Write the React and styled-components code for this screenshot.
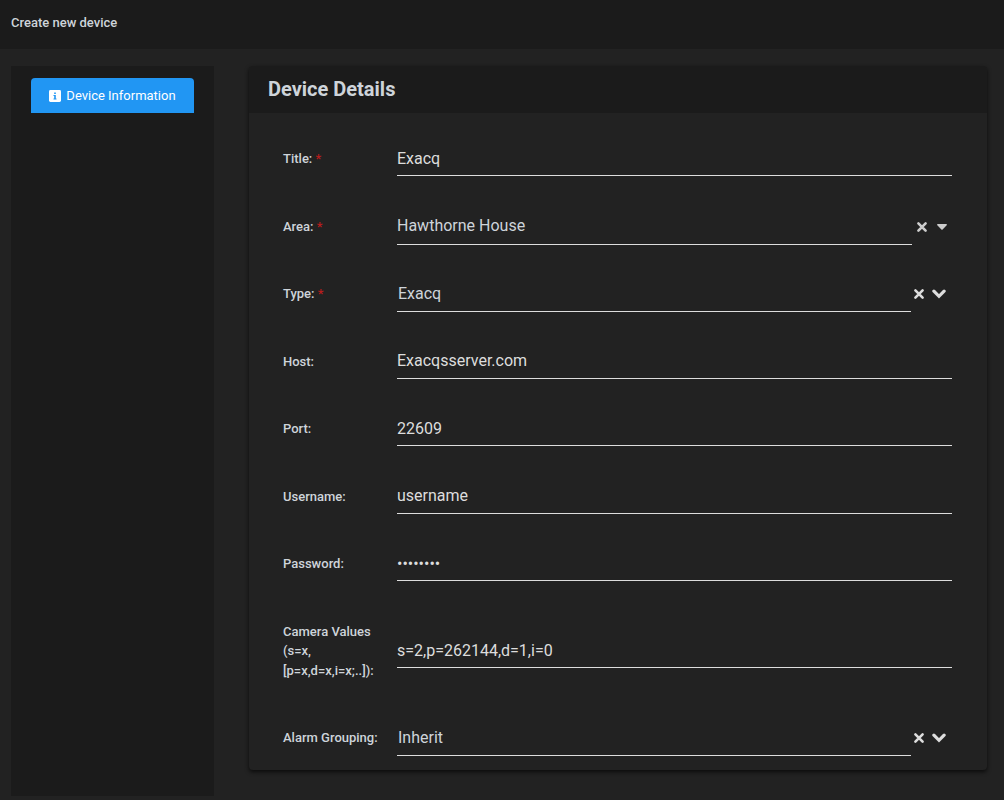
import styled, { createGlobalStyle } from "styled-components";

const FIELDS = [
  { id: "title", label: "Title:", required: true, value: "Exacq" },
  {
    id: "area",
    label: "Area:",
    required: true,
    kind: "tree",
    value: "Hawthorne House",
  },
  { id: "type", label: "Type:", required: true, kind: "select", value: "Exacq" },
  { id: "host", label: "Host:", value: "Exacqsserver.com" },
  { id: "port", label: "Port:", value: "22609" },
  { id: "username", label: "Username:", value: "username" },
  { id: "password", label: "Password:", type: "password", value: "password" },
  {
    id: "camera",
    label: "Camera Values (s=x,[p=x,d=x,i=x;..]):",
    value: "s=2,p=262144,d=1,i=0",
  },
  {
    id: "grouping",
    label: "Alarm Grouping:",
    kind: "select",
    value: "Inherit",
  },
];

const InfoIcon = () => (
  <svg width="12" height="12" viewBox="0 0 12 12" aria-hidden="true">
    <rect width="12" height="12" rx="1.4" fill="#ffffff" />
    <path
      d="M5.2 2.5h1.6V4H5.2zM4.5 5h2.3v3.5h.7v.9h-3v-.9h.7V5.9h-.7z"
      fill="#2196f3"
    />
  </svg>
);

const ClearIcon = () => (
  <svg width="14" height="14" viewBox="0 0 14 14" aria-hidden="true">
    <path
      d="M3.4 3.4l7.2 7.2M10.6 3.4l-7.2 7.2"
      stroke="currentColor"
      strokeWidth="2.6"
      strokeLinecap="round"
    />
  </svg>
);

const ChevronIcon = () => (
  <svg width="15" height="10" viewBox="0 0 15 10" aria-hidden="true">
    <path
      d="M1.9 2.2L7 7.3l5.1-5.1"
      fill="none"
      stroke="currentColor"
      strokeWidth="3.2"
      strokeLinecap="round"
    />
  </svg>
);

const CaretIcon = () => (
  <svg width="10" height="6" viewBox="0 0 10 6" aria-hidden="true">
    <path
      d="M.8 0h8.4c.7 0 1 .7.5 1.2L5.6 5.6a.9.9 0 0 1-1.2 0L.3 1.2C-.2.7.1 0 .8 0z"
      fill="currentColor"
    />
  </svg>
);

const SelectField = ({ id, value, tree }) => {
  return (
    <SelectWrapper>
      <Select id={id} defaultValue={value} $tree={tree}>
        <option>{value}</option>
      </Select>
      <SelectActions $tree={tree}>
        <IconButton type="button" aria-label="Clear" $tree={tree}>
          <ClearIcon />
        </IconButton>
        <IconButton type="button" aria-label="Open" $tree={tree}>
          {tree ? <CaretIcon /> : <ChevronIcon />}
        </IconButton>
      </SelectActions>
    </SelectWrapper>
  );
};

const Field = ({ id, label, required, kind, type = "text", value }) => {
  return (
    <Row>
      <Label htmlFor={id}>
        {label} {required && <Required>*</Required>}
      </Label>
      {kind ? (
        <SelectField id={id} value={value} tree={kind === "tree"} />
      ) : (
        <Input id={id} type={type} defaultValue={value} />
      )}
    </Row>
  );
};

const App = () => {
  return (
    <>
      <GlobalStyle />
      <Page>
        <TopBar>Create new device</TopBar>
        <Content>
          <Sidebar>
            <Tab type="button">
              <InfoIcon />
              Device Information
            </Tab>
          </Sidebar>
          <Card>
            <CardTitle>Device Details</CardTitle>
            <Form>
              {FIELDS.map((field) => (
                <Field key={field.id} {...field} />
              ))}
            </Form>
          </Card>
        </Content>
      </Page>
    </>
  );
};

const GlobalStyle = createGlobalStyle`
  * {
    box-sizing: border-box;
  }

  body {
    margin: 0;
    background: #222222;
    color: #ced4da;
    font-family: Roboto, sans-serif;
    font-size: 13px;
    font-weight: 500;
    line-height: 1.5;
  }
`;

const Page = styled.div`
  display: flex;
  flex-direction: column;
  min-height: 100vh;
`;

const TopBar = styled.header`
  height: 49px;
  padding: 13px 11px;
  background: #1b1b1b;
`;

const Content = styled.main`
  flex: 1;
  display: flex;
  align-items: flex-start;
  gap: 35px;
  padding: 17px 17px 4px 11px;
`;

const Sidebar = styled.nav`
  flex: 0 0 203px;
  align-self: stretch;
  padding: 12px 20px;
  background: #1b1b1b;
`;

const Tab = styled.button`
  display: flex;
  align-items: center;
  justify-content: center;
  gap: 5px;
  width: 100%;
  height: 35px;
  padding: 0;
  border: 0;
  border-radius: 4px 4px 0 0;
  background: #2196f3;
  color: #ffffff;
  font: inherit;
  font-weight: 400;
`;

const Card = styled.section`
  flex: 1;
  min-width: 0;
  border-radius: 4px;
  box-shadow: 0 2px 4px rgba(0, 0, 0, 0.7);
  overflow: hidden;
  background: #222222;
`;

const CardTitle = styled.h2`
  height: 47px;
  margin: 0;
  padding: 0 19px;
  background: #1b1b1b;
  font-size: 20px;
  font-weight: 700;
  line-height: 46px;
`;

const Form = styled.form`
  display: flex;
  flex-direction: column;
  gap: 32px;
  padding: 28px 35px 14px 34px;
`;

const Row = styled.div`
  display: grid;
  grid-template-columns: 114px 1fr;
  align-items: center;
`;

const Label = styled.label`
  padding: 8px 16px 8px 0;
`;

const Required = styled.span`
  color: #b71c1c;
`;

const Input = styled.input`
  width: 100%;
  height: 35px;
  padding: 0;
  border: 0;
  border-bottom: 1px solid #dddddd;
  border-radius: 0;
  outline: 0;
  background: transparent;
  color: #dddddd;
  font: inherit;
  font-size: 16px;
  font-weight: 400;
`;

const SelectWrapper = styled.div`
  display: flex;
  align-items: center;
  margin-bottom: -1px;
`;

const Select = styled.select`
  flex: 1;
  min-width: 0;
  height: 36px;
  padding: 0 0 0 ${({ $tree }) => ($tree ? "0" : "1px")};
  border: 0;
  border-bottom: 1px solid #dddddd;
  border-radius: 0;
  outline: 0;
  appearance: none;
  background: transparent;
  color: #ced4da;
  font: inherit;
  font-size: 16px;
  font-weight: 400;
`;

const SelectActions = styled.div`
  display: flex;
  justify-content: flex-end;
  gap: ${({ $tree }) => ($tree ? "8px" : "6px")};
  padding: 0 5px 0 ${({ $tree }) => ($tree ? "3px" : "1px")};
`;

const IconButton = styled.button`
  display: flex;
  align-items: center;
  padding: 0;
  border: 0;
  background: transparent;
  color: ${({ $tree }) => ($tree ? "#cccccc" : "#dddddd")};
`;

export default App;
